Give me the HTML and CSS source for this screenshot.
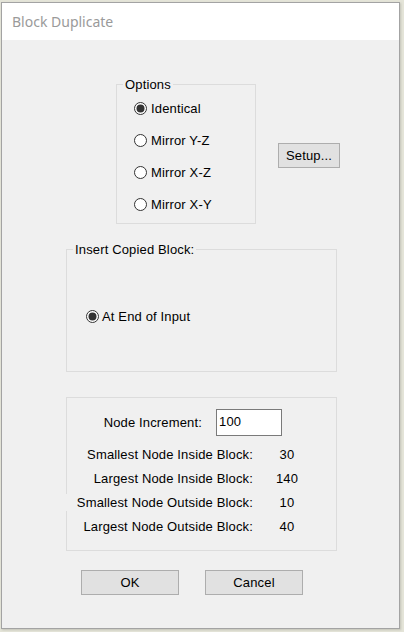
FILE: index.html
```html
<!DOCTYPE html>
<html>
<head>
<meta charset="utf-8">
<link rel="stylesheet" href="styles.css">
</head>
<body>
<div class="window">
  <div class="titlebar">Block Duplicate</div>
  <div class="content">
    <div class="row-top">
      <fieldset class="group options">
        <legend>Options</legend>
        <div class="radio-list">
          <div class="radio-row">
            <svg class="radio" width="13" height="13" viewBox="0 0 13 13"><circle cx="6.5" cy="6.5" r="6" fill="#fff" stroke="#333" stroke-width="1"/><circle cx="6.5" cy="6.5" r="4" fill="#333"/></svg>
            <span class="lbl">Identical</span>
          </div>
          <div class="radio-row">
            <svg class="radio" width="13" height="13" viewBox="0 0 13 13"><circle cx="6.5" cy="6.5" r="6" fill="#fff" stroke="#333" stroke-width="1"/></svg>
            <span class="lbl">Mirror Y-Z</span>
          </div>
          <div class="radio-row">
            <svg class="radio" width="13" height="13" viewBox="0 0 13 13"><circle cx="6.5" cy="6.5" r="6" fill="#fff" stroke="#333" stroke-width="1"/></svg>
            <span class="lbl">Mirror X-Z</span>
          </div>
          <div class="radio-row">
            <svg class="radio" width="13" height="13" viewBox="0 0 13 13"><circle cx="6.5" cy="6.5" r="6" fill="#fff" stroke="#333" stroke-width="1"/></svg>
            <span class="lbl">Mirror X-Y</span>
          </div>
        </div>
      </fieldset>
      <button class="btn setup">Setup...</button>
    </div>

    <fieldset class="group insert">
      <legend>Insert Copied Block:</legend>
      <div class="insert-body">
        <div class="radio-row single">
          <svg class="radio" width="13" height="13" viewBox="0 0 13 13"><circle cx="6.5" cy="6.5" r="6" fill="#fff" stroke="#333" stroke-width="1"/><circle cx="6.5" cy="6.5" r="4" fill="#333"/></svg>
          <span class="lbl">At End of Input</span>
        </div>
      </div>
    </fieldset>

    <div class="nodes">
      <div class="inc-row">
        <span class="inc-lbl">Node Increment:</span>
        <div class="input">100</div>
      </div>
      <div class="info-row"><span class="info-lbl">Smallest Node Inside Block:</span><span class="info-val">30</span></div>
      <div class="info-row"><span class="info-lbl">Largest Node Inside Block:</span><span class="info-val">140</span></div>
      <div class="info-row"><span class="info-lbl wide">Smallest Node Outside Block:</span><span class="info-val">10</span></div>
      <div class="info-row"><span class="info-lbl">Largest Node Outside Block:</span><span class="info-val">40</span></div>
    </div>

    <div class="buttons">
      <button class="btn action ok">OK</button>
      <button class="btn action cancel">Cancel</button>
    </div>
  </div>
</div>
</body>
</html>
```

FILE: styles.css
```css
html, body {
  margin: 0;
  padding: 0;
}
body {
  background: #e4e4d8;
  padding: 2px 0 0 1px;
  width: 404px;
  height: 632px;
  box-sizing: border-box;
  overflow: hidden;
  font-family: "Liberation Sans", Arial, sans-serif;
  font-size: 13px;
  letter-spacing: 0.15px;
  color: #000;
}
.window {
  width: 399px;
  height: 627px;
  box-sizing: border-box;
  border: 1px solid #a3a3a3;
  display: flex;
  flex-direction: column;
  background: #f0f0f0;
  box-shadow: 1px 1px 2px rgba(0,0,0,0.15);
}
.titlebar {
  height: 37px;
  flex: none;
  background: #fff;
  display: flex;
  align-items: center;
  padding-left: 10px;
  font-family: "Noto Sans", "Open Sans", sans-serif;
  font-size: 14px;
  letter-spacing: 0;
  color: #9a9a9a;
}
.content {
  flex: 1;
  background: #f0f0f0;
  display: flex;
  flex-direction: column;
}
.row-top {
  display: flex;
  align-items: flex-start;
  margin-top: 37px;
}
.group {
  margin: 0;
  padding: 0;
  border: 1px solid #dcdcdc;
  box-sizing: border-box;
  min-width: 0;
}
.group legend {
  padding: 0 2px;
  margin-left: 6px;
  line-height: 15px;
  font-size: 13px;
}
.options {
  width: 140px;
  margin-left: 114px;
}
.radio-list {
  padding: 0 0 3px 17px;
}
.radio-row {
  height: 32px;
  display: flex;
  align-items: center;
}
.radio {
  flex: none;
  display: block;
}
.radio-row .lbl {
  margin-left: 4px;
  line-height: 15px;
}
.btn {
  font-family: "Liberation Sans", Arial, sans-serif;
  font-size: 13px;
  letter-spacing: 0.15px;
  color: #000;
  background: #e1e1e1;
  border: 1px solid #adadad;
  box-sizing: border-box;
  padding: 0;
  height: 25px;
  margin: 0;
}
.setup {
  width: 62px;
  margin-top: 66px;
  margin-left: 22px;
}
.insert {
  width: 271px;
  margin-left: 64px;
  margin-top: 18px;
}
.insert-body {
  padding: 49px 0 45px 19px;
}
.radio-row.single {
  height: 20px;
}
.radio-row.single .lbl {
  margin-left: 3px;
}
.nodes {
  width: 271px;
  height: 154px;
  box-sizing: border-box;
  margin-left: 64px;
  margin-top: 25px;
  border: 1px solid #dcdcdc;
  padding-top: 11px;
}
.inc-row {
  display: flex;
  align-items: center;
  height: 27px;
  margin-bottom: 6px;
}
.inc-lbl {
  width: 135px;
  text-align: right;
}
.input {
  margin-left: 14px;
  width: 66px;
  height: 27px;
  box-sizing: border-box;
  border: 1px solid #7a7a7a;
  background: #fff;
  padding: 3px 0 0 2px;
  line-height: 17px;
}
.info-row {
  display: flex;
  align-items: center;
  height: 24px;
}
.info-lbl {
  width: 186px;
  text-align: right;
  line-height: 17px;
  background: #f0f0f0;
}
.info-lbl.wide {
  margin-left: -3px;
  width: 189px;
}
.info-val {
  margin-left: 14px;
  width: 40px;
  text-align: center;
}
.buttons {
  display: flex;
  margin-top: 19px;
}
.action {
  width: 98px;
}
.ok {
  margin-left: 79px;
}
.cancel {
  margin-left: 26px;
}
```
